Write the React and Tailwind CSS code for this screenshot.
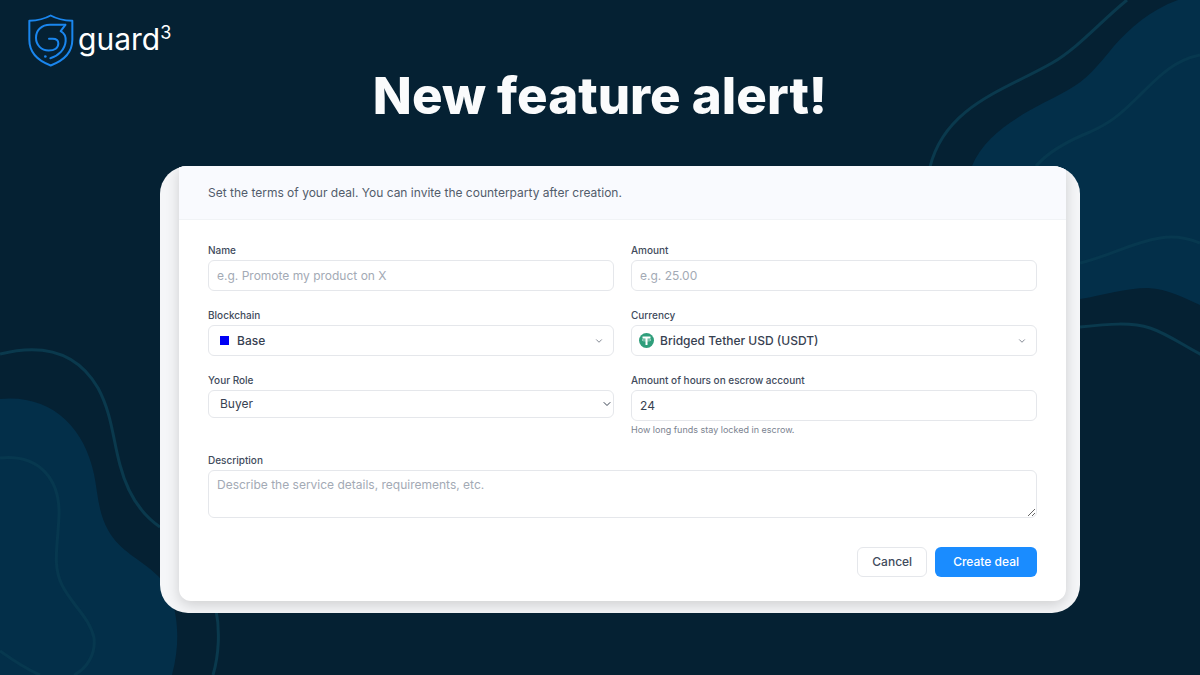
import { useState } from "react";
import { ChevronDown } from "lucide-react";

const labelClass = "block text-[10px] leading-4 font-medium text-[#414b5c]";
const fieldClass =
  "block w-full rounded-md border border-[#e5e7eb] bg-white text-xs leading-5 text-[#374151] placeholder:text-[#a3aab5] outline-none focus:border-[#1a8cff]";

function Waves() {
  return (
    <svg
      className="absolute inset-0 h-full w-full"
      viewBox="0 0 1200 675"
      preserveAspectRatio="xMidYMid slice"
      fill="none"
      aria-hidden="true">
      <g fill="#032f49">
        <path d="M1178 0C1150 10 1130 28 1114 46C1098 66 1085 81 1068 90C1040 106 988 126 972 166L972 330L1080 299C1105 295 1125 288 1148 288C1168 289 1184 298 1200 305V0Z" />
        <path d="M0 399C50 394 84 426 94 474C98 494 98 512 108 530C120 552 141 559 158 576C174 592 184 630 172 675H0Z" />
      </g>
      <g stroke="#0a394d" strokeWidth="3">
        <path d="M1127 0C1100 22 1078 48 1052 63C1005 90 945 106 930 167" />
        <path d="M1080 327C1108 324 1132 322 1150 328C1168 334 1184 346 1202 355" />
        <path d="M0 354C40 344 76 350 98 388C112 414 113 440 120 465C126 488 138 512 160 527" />
        <path d="M216 610C220 630 219 655 213 675" />
      </g>
      <g stroke="#07384f" strokeWidth="3">
        <path d="M1200 55C1175 60 1160 75 1140 95C1120 115 1110 123 1090 132C1070 140 1050 150 1036 166" />
        <path d="M1080 263C1110 256 1130 243 1160 238C1177 235 1190 239 1200 243" />
        <path d="M0 458C40 454 60 480 59 515C58 545 52 565 62 585C72 605 90 618 94 638C96 655 86 669 74 675" />
        <path d="M0 651C14 661 26 669 40 675" />
      </g>
    </svg>
  );
}

function Logo() {
  return (
    <a href="/" className="flex items-center gap-1 text-white">
      <svg
        className="h-[53px] w-[46px]"
        viewBox="24 28 138 158"
        fill="none"
        stroke="#1a86ee"
        strokeWidth="6"
        strokeLinecap="round"
        strokeLinejoin="round"
        aria-hidden="true">
        <path d="M92 32C74 42 52 47 28 48V105C28 145 54 168 92 182C130 168 157 145 157 105V48C132 47 110 42 92 32Z" />
        <path d="M136 60H90C64 60 48 77 48 99C48 121 64 137 86 137C104 137 115 129 115 116C115 106 108 102 98 102H87" />
        <path d="M136 60L122 79C133 85 138 95 137 109C135 134 116 153 91 160" />
        <circle cx="76" cy="155" r="4" fill="#1a86ee" stroke="none" />
      </svg>
      <span className="flex pb-1 text-[30px] leading-8">
        guard
        <sup className="top-0 text-lg leading-5">3</sup>
      </span>
    </a>
  );
}

function TetherIcon() {
  return (
    <svg className="h-[15px] w-[15px]" viewBox="0 0 30 30" aria-hidden="true">
      <circle cx="15" cy="15" r="15" fill="#2f9e7b" />
      <path d="M7 7H23V11H17V24H13V11H7Z" fill="#fff" />
      <ellipse cx="15" cy="14" rx="9" ry="2" fill="none" stroke="#fff" />
    </svg>
  );
}

function Field({ id, label, children }) {
  return (
    <div>
      <label htmlFor={id} className={labelClass}>
        {label}
      </label>
      <div className="relative mt-0.5">{children}</div>
    </div>
  );
}

function App() {
  const [form, setForm] = useState({
    name: "",
    amount: "",
    blockchain: "base",
    currency: "usdt",
    role: "buyer",
    hours: "24",
    description: "",
  });

  const handleChange = (e) => {
    setForm({ ...form, [e.target.name]: e.target.value });
  };

  return (
    <div className="relative min-h-screen overflow-hidden bg-[#052133] font-['Inter',sans-serif]">
      <Waves />
      <div className="relative">
        <header className="flex px-7 pt-3.5">
          <Logo />
        </header>
        <h1 className="text-center text-[51px] leading-[58px] font-extrabold text-[#fafbfc]">
          New feature alert!
        </h1>

        <main className="mt-[41px] pr-30 pb-15 pl-40">
          <div className="overflow-hidden rounded-[28px] bg-[#f5f6f8] pr-3.5 pb-3 pl-[19px]">
            <form
              className="rounded-b-xl bg-white shadow-[0_4px_14px_rgba(0,0,0,0.16)]"
              onSubmit={(e) => e.preventDefault()}>
              <p className="border-b border-[#f1f3f6] bg-[#f9fafe] px-[29px] pt-[17px] pb-4 text-xs leading-5 text-[#525c6b]">
                Set the terms of your deal. You can invite the counterparty
                after creation.
              </p>

              <div className="px-[29px] pt-[22px] pb-6">
                <div className="grid grid-cols-2 gap-x-[17px] gap-y-4">
                  <Field id="name" label="Name">
                    <input
                      id="name"
                      name="name"
                      value={form.name}
                      onChange={handleChange}
                      placeholder="e.g. Promote my product on X"
                      className={`${fieldClass} h-[31px] px-2`}
                    />
                  </Field>
                  <Field id="amount" label="Amount">
                    <input
                      id="amount"
                      name="amount"
                      value={form.amount}
                      onChange={handleChange}
                      placeholder="e.g. 25.00"
                      className={`${fieldClass} h-[31px] px-2`}
                    />
                  </Field>
                  <Field id="blockchain" label="Blockchain">
                    <select
                      id="blockchain"
                      name="blockchain"
                      value={form.blockchain}
                      onChange={handleChange}
                      className={`${fieldClass} h-[31px] appearance-none pl-7 font-medium`}>
                      <option value="base">Base</option>
                    </select>
                    <span className="pointer-events-none absolute inset-y-0 left-3 flex items-center">
                      <span className="h-[9px] w-[9px] bg-[#0000f5]" />
                    </span>
                    <span className="pointer-events-none absolute inset-y-0 right-2.5 flex items-center text-[#6b7280]">
                      <ChevronDown size={10} />
                    </span>
                  </Field>
                  <Field id="currency" label="Currency">
                    <select
                      id="currency"
                      name="currency"
                      value={form.currency}
                      onChange={handleChange}
                      className={`${fieldClass} h-[31px] appearance-none pl-7 font-medium`}>
                      <option value="usdt">Bridged Tether USD (USDT)</option>
                    </select>
                    <span className="pointer-events-none absolute inset-y-0 left-2 flex items-center">
                      <TetherIcon />
                    </span>
                    <span className="pointer-events-none absolute inset-y-0 right-2.5 flex items-center text-[#6b7280]">
                      <ChevronDown size={10} />
                    </span>
                  </Field>
                  <Field id="role" label="Your Role">
                    <select
                      id="role"
                      name="role"
                      value={form.role}
                      onChange={handleChange}
                      className={`${fieldClass} h-7 appearance-none pl-[11px]`}>
                      <option value="buyer">Buyer</option>
                      <option value="seller">Seller</option>
                    </select>
                    <span className="pointer-events-none absolute top-2 right-px text-[#374151]">
                      <ChevronDown size={12} />
                    </span>
                  </Field>
                  <Field id="hours" label="Amount of hours on escrow account">
                    <input
                      id="hours"
                      name="hours"
                      value={form.hours}
                      onChange={handleChange}
                      className={`${fieldClass} h-[31px] px-2`}
                    />
                    <p className="mt-[3px] text-[9px] leading-3 text-[#7b8390]">
                      How long funds stay locked in escrow.
                    </p>
                  </Field>
                  <div className="col-span-2">
                    <Field id="description" label="Description">
                      <textarea
                        id="description"
                        name="description"
                        value={form.description}
                        onChange={handleChange}
                        placeholder="Describe the service details, requirements, etc."
                        className={`${fieldClass} h-12 resize-y px-2 py-1`}
                      />
                    </Field>
                  </div>
                </div>

                <div className="mt-[29px] flex justify-end gap-2">
                  <button
                    type="button"
                    className="h-[30px] rounded-md border border-[#e5e7eb] bg-white px-3.5 text-xs leading-5 font-medium text-[#414b5c]">
                    Cancel
                  </button>
                  <button
                    type="submit"
                    className="h-[30px] rounded-md bg-[#1a8cff] px-[18px] text-xs leading-5 font-medium text-white">
                    Create deal
                  </button>
                </div>
              </div>
            </form>
          </div>
        </main>
      </div>
    </div>
  );
}

export default App;
